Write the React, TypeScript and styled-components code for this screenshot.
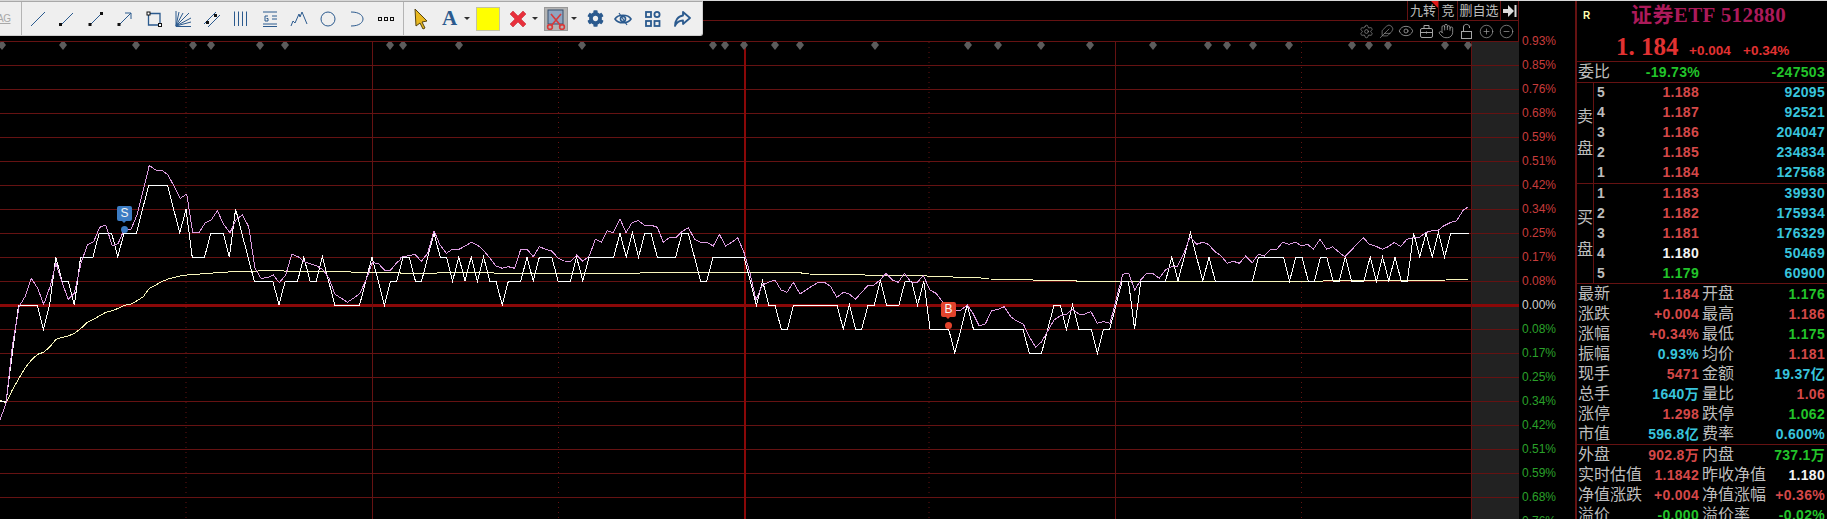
import React from 'react';
import styled, { createGlobalStyle } from 'styled-components';
import { Hand, Eye, CirclePlus, CircleMinus, Feather, Settings } from 'lucide-react';
import { FaCog } from 'react-icons/fa';

const GlobalStyle = createGlobalStyle`
  html, body { margin: 0; padding: 0; background: #000; }
  * { box-sizing: border-box; }
`;

const RED = '#d44848';
const GREEN = '#22c42a';
const CYAN = '#38c4dc';
const WHITE = '#f4f4f4';
const GRID = '#651212';
const STRONG = '#8a0808';
const NAVY = '#2b5a8e';

// chart data, traced from the picture
const white = [0,-4,1,-4,2,-2,3,0,6,0,7,-1,8,0,9,2,10,1,11,1,12,0,13,2,15,2,16,3,18,3,19,2,20,3,22,3,24,5,27,5,29,3,30,4,31,2,33,2,34,3,36,3,37,2,38,4,41,1,44,1,45,0,46,1,48,1,49,2,50,1,51,1,52,2,54,0,58,0,60,2,62,0,63,1,64,1,65,2,66,2,67,1,68,1,70,3,71,2,72,2,73,1,74,2,75,1,76,2,77,1,78,2,79,1,80,1,81,0,82,1,84,1,85,2,86,1,87,2,89,2,90,1,92,1,93,2,94,1,95,2,99,2,100,3,101,2,102,3,103,2,104,3,105,3,106,2,109,2,110,3,111,3,112,2,113,1,114,1,115,2,120,2,122,0,123,1,124,0,125,0,126,-1,127,-1,128,0,135,0,136,-1,137,0,138,-1,139,-1,140,0,141,0,142,1,143,0,145,0,146,1,147,1,148,0,149,1,150,-1,153,-1,154,-2,156,0,157,-1,165,-1,166,-2,168,-2,169,-1,170,0,171,0,172,-1,173,0,174,-1,176,-1,177,-2,178,-1,179,-1,181,1,182,1,183,-1,184,1,188,1,189,2,190,1,192,3,194,1,195,2,196,1,202,1,203,2,207,2,208,1,209,2,210,2,211,1,212,1,213,2,214,2,215,1,216,1,217,2,218,1,220,1,221,2,222,1,223,2,224,1,225,2,226,1,227,1,228,3,229,2,230,3,231,2,232,3,233,2,234,3,237,3];

const whitePoints = () => {
  const out: string[] = [];
  for (let i = 0; i < white.length; i += 2) out.push(`${(white[i] * 6.2).toFixed(1)},${305 - 24 * white[i + 1]}`);
  return out.join(' ');
};

const seg = (ox: number, oy: number, p: number[]) => {
  const out: string[] = [];
  for (let i = 0; i < p.length; i += 2) out.push(`${(ox + p[i] / 3).toFixed(1)},${(oy + p[i + 1] / 3).toFixed(1)}`);
  return out.join(' ');
};

const violet = [
  seg(0, 140, [0,840,18,790,37,620,57,500,75,470,94,415,113,445,131,493,150,440,168,370,187,430,205,478,223,460,243,370,262,315,281,305,299,262,317,255,337,318,355,310,374,265,392,270,411,225,430,150,448,76,467,90,485,90,504,105,523,140,541,175,560,162,578,278,597,278,616,248,634,240,652,212,672,255,690,278,709,238,727,225,746,260,765,385,783,415,802,413,820,405,838,428,857,405,875,343,895,350,913,365,932,372,950,378,968,388,987,415,1005,463,1024,475,1042,487,1060,475,1080,460,1098,420,1117,368,1135,370,1153,390,1172,390,1190,368,1200,360]),
  seg(400, 190, [0,205,8,200,26,197,45,193,64,214,83,190,102,122,120,165,139,190,157,178,177,178,196,168,214,157,232,165,250,180,270,205,288,228,307,235,325,230,344,235,362,178,381,178,400,200,418,170,437,178,455,183,475,205,493,213,512,214,530,195,548,214,568,198,586,148,604,157,622,122,640,128,660,86,678,128,696,98,715,92,733,105,752,105,772,112,790,157,808,143,827,143,845,125,865,113,884,148,902,157,920,157,940,168,958,133,977,168,995,157,1013,143,1033,190]),
  seg(750, 190, [0,250,18,330,37,285,55,277,75,270,93,300,111,307,130,277,150,312,168,300,186,288,205,277,224,277,242,290,260,322,280,307,298,312,316,328,335,307,353,287,372,285,390,270,408,250,427,270,445,277,463,250,483,277,502,277,520,257,540,300,558,310,577,335,595,350,614,360,633,360,652,345,670,372,688,408,706,402,725,362,745,358,763,350,782,380,800,393,820,402,838,440,857,472,875,455,895,420,912,390,930,378,950,372,968,358,986,372,1004,372,1023,365,1042,400,1060,395,1080,400,1098,330]),
  seg(1120, 190, [8,253,26,250,44,300,62,270,80,250,98,250,118,265,136,240,154,230,172,230,192,190,210,140,230,163,248,157,265,163,285,185,303,197,322,220,340,214,358,220,377,198,397,218,415,193,433,198,452,178,470,178,488,157,508,163,527,157,545,168,563,163,580,178,600,148,620,178,638,170,655,185,674,200,692,183,710,163,730,143,748,163,766,168,787,178,805,170,823,157,842,170,860,148,880,143,898,143,916,128,935,122,953,122,972,107,990,98,1010,92,1030,60,1043,52]),
].join(' ');

const average = [
  seg(0, 140, [0,780,18,790,37,750,57,715,75,685,94,660,113,643,131,637,150,620,168,598,187,592,205,588,223,580,243,565,262,547,281,538,299,527,317,517,337,512,355,505,374,496,392,493,411,482,430,470,448,445,467,435,485,425,504,417,523,412,541,408,560,405,600,402,650,398,720,394,830,392,900,395,1030,395,1100,398,1200,398]),
  seg(400, 190, [0,250,110,250,112,247,280,247,282,250,720,250,722,247,1050,247]),
  seg(750, 190, [105,247,175,250,177,252,345,254,347,257,530,257,532,259,640,262,715,265,717,267,845,268,847,270,978,272,980,274,1115,276]),
  seg(1120, 190, [0,275,608,275,610,272,870,272,872,271,980,270,982,268,1043,268]),
].join(' ');

const diamonds = [2,63,136,193,211,260,285,390,403,459,582,713,725,744,775,800,875,968,998,1041,1090,1153,1208,1227,1253,1289,1352,1369,1388,1445,1468];
const levels = [65,89,113,137,161,185,209,233,257,281,329,353,377,401,425,449,473,497];

const axisLabels: [string, string][] = [
  ['0.93%', 'up'],['0.85%', 'up'],['0.76%', 'up'],['0.68%', 'up'],['0.59%', 'up'],['0.51%', 'up'],['0.42%', 'up'],['0.34%', 'up'],['0.25%', 'up'],['0.17%', 'up'],['0.08%', 'up'],
  ['0.00%', 'flat'],
  ['0.08%', 'down'],['0.17%', 'down'],['0.25%', 'down'],['0.34%', 'down'],['0.42%', 'down'],['0.51%', 'down'],['0.59%', 'down'],['0.68%', 'down'],['0.76%', 'down'],
];

const sells = [['5','1.188','92095'],['4','1.187','92521'],['3','1.186','204047'],['2','1.185','234834'],['1','1.184','127568']];
const buys = [['1','1.183','39930',RED],['2','1.182','175934',RED],['3','1.181','176329',RED],['4','1.180','50469',WHITE],['5','1.179','60900',GREEN]];

type Cell = [string, string, string];
const infoRows: [Cell, Cell][] = [
  [['最新','1.184',RED],['开盘','1.176',GREEN]],
  [['涨跌','+0.004',RED],['最高','1.186',RED]],
  [['涨幅','+0.34%',RED],['最低','1.175',GREEN]],
  [['振幅','0.93%',CYAN],['均价','1.181',RED]],
  [['现手','5471',RED],['金额','19.37亿',CYAN]],
  [['总手','1640万',CYAN],['量比','1.06',RED]],
  [['涨停','1.298',RED],['跌停','1.062',GREEN]],
  [['市值','596.8亿',CYAN],['费率','0.600%',CYAN]],
];
const fundRows: [Cell, Cell][] = [
  [['外盘','902.8万',RED],['内盘','737.1万',GREEN]],
  [['实时估值','1.1842',RED],['昨收净值','1.180',WHITE]],
  [['净值涨跌','+0.004',RED],['净值涨幅','+0.36%',RED]],
  [['溢价','-0.000',GREEN],['溢价率','-0.02%',GREEN]],
];

const Page = styled.div`
  width: 1827px;
  height: 519px;
  display: flex;
  overflow: hidden;
  background: #000;
  border-top: 1px solid #d8d8d8;
  font-family: 'Liberation Sans', 'Noto Sans CJK SC', sans-serif;
`;

const ChartColumn = styled.div`
  position: relative;
  width: 1519px;
  flex: none;
  display: flex;
  flex-direction: column;
`;

const HeaderRow = styled.div<{ $height: number }>`
  height: ${p => p.$height}px;
  flex: none;
  display: flex;
  justify-content: flex-end;
  align-items: stretch;
  border-bottom: 1px solid ${GRID};
  border-right: 1px solid ${GRID};
`;

const HeaderButton = styled.div<{ $width: number; $flagged?: boolean }>`
  position: relative;
  width: ${p => p.$width}px;
  display: flex;
  align-items: center;
  justify-content: center;
  border-left: 1px solid ${GRID};
  color: #bcbcbc;
  font-size: 13px;
  line-height: 1;
  ${p => p.$flagged && `
    &::after {
      content: '';
      position: absolute;
      top: 0;
      right: 0;
      border-top: 7px solid #e01818;
      border-left: 7px solid transparent;
    }
  `}
`;

const ViewTools = styled.div`
  display: flex;
  align-items: center;
  padding-right: 2px;
  color: #a4a4a4;
`;

const ViewTool = styled.span`
  width: 20px;
  height: 20px;
  display: flex;
  align-items: center;
  justify-content: center;
`;

const Plot = styled.div`
  position: relative;
  flex: 1;
  min-height: 0;
`;

const PlotSvg = styled.svg`
  display: block;
  width: 1519px;
  height: 477px;
`;

const Marker = styled.div<{ $left: number; $top: number; $color: string }>`
  position: absolute;
  left: ${p => p.$left}px;
  top: ${p => p.$top}px;
  width: 15px;
  height: 15px;
  border-radius: 2px;
  background: ${p => p.$color};
  color: #f4f4f4;
  font-size: 12px;
  line-height: 15px;
  text-align: center;
  &::after {
    content: '';
    position: absolute;
    left: 5px;
    top: 15px;
    border-top: 2px solid ${p => p.$color};
    border-left: 2px solid transparent;
    border-right: 2px solid transparent;
  }
`;

const MarkerDot = styled.div<{ $left: number; $top: number; $color: string }>`
  position: absolute;
  left: ${p => p.$left}px;
  top: ${p => p.$top}px;
  width: 7px;
  height: 7px;
  border-radius: 50%;
  background: ${p => p.$color};
`;

const Toolbar = styled.div`
  position: absolute;
  left: 0;
  top: 0;
  width: 703px;
  height: 35px;
  display: flex;
  align-items: center;
  background: #efefef;
  border-top: 1px solid #a8a8a8;
  border-right: 1px solid #cfcfcf;
  border-bottom: 1px solid #cfcfcf;
  border-radius: 0 0 3px 0;
`;

const ToolGroup = styled.div<{ $width: number; $pad: number }>`
  width: ${p => p.$width}px;
  height: 100%;
  flex: none;
  display: flex;
  align-items: center;
  padding-left: ${p => p.$pad}px;
  overflow: hidden;
  border-right: 1px solid #b4b4b4;
`;

const ToolGroupEnd = styled(ToolGroup)`
  border-right: none;
`;

const ClippedTag = styled.span`
  color: #a8a8a8;
  font-size: 10px;
  text-decoration: underline;
  margin-left: -3px;
  letter-spacing: -0.5px;
`;

const Tool = styled.span<{ $width: number }>`
  width: ${p => p.$width}px;
  height: 24px;
  flex: none;
  display: flex;
  align-items: center;
  justify-content: center;
  color: ${NAVY};
`;

const Letter = styled.span`
  font-family: 'Liberation Serif', serif;
  font-weight: 700;
  font-size: 21px;
  line-height: 1;
  color: ${NAVY};
`;

const Caret = styled.span`
  flex: none;
  width: 0;
  height: 0;
  border-top: 3px solid #303030;
  border-left: 3px solid transparent;
  border-right: 3px solid transparent;
  margin-right: 6px;
`;

const Swatch = styled.span`
  flex: none;
  width: 24px;
  height: 24px;
  margin-right: 4px;
  background: #ffff00;
  border: 1px solid #c4c4a0;
`;

const PressedTool = styled.span`
  flex: none;
  width: 24px;
  height: 24px;
  margin-right: 3px;
  display: flex;
  align-items: center;
  justify-content: center;
  background: #b4b4b4;
  border: 1px solid #999;
`;

const Axis = styled.div`
  width: 56px;
  flex: none;
  padding: 28px 0 0 3px;
  font-size: 12px;
  overflow: hidden;
`;

const AxisLabel = styled.div<{ $kind: string }>`
  height: 24px;
  line-height: 24px;
  color: ${p => (p.$kind === 'up' ? '#c83c3c' : p.$kind === 'down' ? '#2aa12a' : '#cfcfcf')};
`;

const Panel = styled.div`
  flex: 1;
  min-width: 0;
  display: flex;
  flex-direction: column;
  border-left: 2px solid ${GRID};
  color: #bdbdbd;
  font-size: 16px;
`;

const TitleRow = styled.div`
  height: 30px;
  flex: none;
  display: flex;
  align-items: center;
  padding: 0 0 2px 6px;
`;

const RowTag = styled.span`
  width: 48px;
  flex: none;
  color: #ffffb0;
  font-size: 10px;
  font-weight: 700;
`;

const Title = styled.span`
  color: #ac1a5a;
  font-family: 'Liberation Serif', 'Noto Sans CJK SC', serif;
  font-size: 21px;
  font-weight: 700;
  line-height: 1;
  letter-spacing: 0.4px;
  white-space: nowrap;
`;

const PriceRow = styled.div`
  height: 31px;
  flex: none;
  display: flex;
  align-items: baseline;
  padding: 2px 0 0 39px;
  border-bottom: 1px solid ${GRID};
  color: #e23232;
`;

const BigPrice = styled.span`
  width: 73px;
  font-family: 'Liberation Serif', serif;
  font-size: 25px;
  font-weight: 700;
  white-space: pre;
`;

const SmallChange = styled.span`
  width: 54px;
  font-size: 13.5px;
  font-weight: 700;
`;

const Number = styled.span<{ $color: string }>`
  color: ${p => p.$color};
  font-size: 14px;
  font-weight: 700;
  letter-spacing: 0.3px;
  white-space: nowrap;
`;

const RatioRow = styled.div`
  height: 21px;
  flex: none;
  display: grid;
  grid-template-columns: 122px 125px;
  align-items: center;
  padding-left: 1px;
  border-bottom: 1px solid ${GRID};
`;

const HalfCell = styled.div`
  display: flex;
  justify-content: space-between;
  align-items: center;
  min-width: 0;
  white-space: nowrap;
  line-height: 20px;
`;

const Depth = styled.div<{ $height: number }>`
  height: ${p => p.$height}px;
  flex: none;
  display: flex;
  border-bottom: 1px solid ${GRID};
`;

const DepthSide = styled.div`
  width: 17px;
  flex: none;
  display: flex;
  flex-direction: column;
  justify-content: center;
  gap: 16px;
  border-right: 1px solid ${GRID};
  line-height: 16px;
`;

const DepthRows = styled.div`
  flex: 1;
  min-width: 0;
  display: flex;
  flex-direction: column;
`;

const DepthRow = styled.div`
  height: 20px;
  flex: none;
  display: grid;
  grid-template-columns: 14px 88px 126px;
  align-items: center;
  padding: 0 0 2px 3px;
`;

const RightNumber = styled(Number)`
  text-align: right;
`;

const InfoBlock = styled.div`
  flex: none;
  display: flex;
  flex-direction: column;
  padding-left: 1px;
`;

const TopRule = styled(InfoBlock)`
  border-bottom: 1px solid ${GRID};
`;

const InfoRow = styled.div`
  height: 20px;
  flex: none;
  display: grid;
  grid-template-columns: 121px 123px;
  column-gap: 3px;
  align-items: center;
  padding-bottom: 2px;
`;

const ICON = { fill: 'none', stroke: 'currentColor', strokeWidth: 1 };

const LineIcon = () => <svg width="18" height="18" viewBox="0 0 18 18" {...ICON}><path d="M2 16 L16 2" /></svg>;
const RayIcon = () => <svg width="18" height="18" viewBox="0 0 18 18" {...ICON}><path d="M3 15 L15 3" /><rect x="1" y="13" width="3" height="3" fill="#111" stroke="none" /></svg>;
const SegmentIcon = () => <svg width="18" height="18" viewBox="0 0 18 18" {...ICON}><path d="M3 15 L14 4" /><rect x="1.5" y="13" width="3" height="3" fill="#111" stroke="none" /><rect x="13" y="2" width="3" height="3" fill="#111" stroke="none" /></svg>;
const ArrowIcon = () => <svg width="18" height="18" viewBox="0 0 18 18" {...ICON}><path d="M3 15 L15 3 M9 3 H15 V9" /><rect x="1.5" y="13" width="3" height="3" fill="#111" stroke="none" /></svg>;
const RectIcon = () => <svg width="18" height="18" viewBox="0 0 18 18" {...ICON}><path d="M3.5 3.5 H15 V15 H3.5 Z" strokeWidth="1.3" /><rect x="2" y="2" width="3" height="3" fill="#fff" stroke="#111" /><rect x="13.5" y="13.5" width="3" height="3" fill="#fff" stroke="#111" /></svg>;
const FanIcon = () => <svg width="18" height="18" viewBox="0 0 18 18" {...ICON}><path d="M2 1 V16.5 H17 M2 16 L5 2 M2 16 L9 3 M2 16 L15 3 M2 16 L17 8 M2 16 L17 12" /></svg>;
const ParallelIcon = () => <svg width="18" height="18" viewBox="0 0 18 18" {...ICON}><path d="M1 14 L13 2 M5 17 L17 5" /><rect x="3" y="11" width="3" height="3" fill="#111" stroke="none" /><rect x="11" y="4" width="3" height="3" fill="#111" stroke="none" /></svg>;
const BarsIcon = () => <svg width="18" height="18" viewBox="0 0 18 18" {...ICON}><path d="M2.5 1.5 V16 M6.5 1.5 V16 M10.5 1.5 V16 M14.5 1.5 V16" /></svg>;
const GannIcon = () => <svg width="18" height="18" viewBox="0 0 18 18" {...ICON}><path d="M2 2 H16 M2 14 H16 M2 16.5 H16 M11 6 H16 M11 9 H16 M7 6 H4 V11 H7 V8.5 H5.5" /></svg>;
const PeakIcon = () => <svg width="18" height="18" viewBox="0 0 18 18" {...ICON}><path d="M1 16 L3 11 L5 13 L9 4 L10 7 L12 2 L17 14" /></svg>;
const CircleIcon = () => <svg width="18" height="18" viewBox="0 0 18 18" {...ICON}><circle cx="9" cy="9" r="7" /></svg>;
const ArcIcon = () => <svg width="18" height="18" viewBox="0 0 18 18" {...ICON}><path d="M3 2 C12 2 15 6 15 9 C15 12 12 16 3 16" /></svg>;
const DotsIcon = () => <svg width="18" height="18" viewBox="0 0 18 18" fill="none" stroke="#111"><rect x="1.5" y="7.5" width="3" height="3" /><rect x="7.5" y="7.5" width="3" height="3" /><rect x="13.5" y="7.5" width="3" height="3" /></svg>;
const CursorIcon = () => <svg width="16" height="22" viewBox="0 0 16 22"><path d="M2 1 L14 13 L9 14 L12 20 L10 21 L7 15 L3 18 Z" fill="#e8b820" stroke="#554410" /></svg>;
const CrossIcon = () => <svg width="20" height="20" viewBox="0 0 20 20"><path d="M2 5 L5 2 L10 7 L15 2 L18 5 L13 10 L18 15 L15 18 L10 13 L5 18 L2 15 L7 10 Z" fill="#e8303c" stroke="#c02028" strokeWidth="0.5" /></svg>;
const EraseIcon = () => (
  <svg width="20" height="22" viewBox="0 0 20 22" fill="none">
    <rect x="2" y="2" width="15" height="14" fill="#8fa4c0" stroke="#38506e" />
    <path d="M5 6 L15 18 M15 6 L5 18" stroke="#d83a3a" strokeWidth="1.6" />
    <circle cx="4" cy="19" r="2.4" stroke="#d83a3a" strokeWidth="1.6" />
    <circle cx="16" cy="19" r="2.4" stroke="#d83a3a" strokeWidth="1.6" />
  </svg>
);
const HiddenIcon = () => (
  <svg width="18" height="18" viewBox="0 0 18 18" fill="none" stroke={NAVY} strokeWidth="1.6">
    <path d="M1 9 C4 4 14 4 17 9 C14 14 4 14 1 9 Z" />
    <circle cx="9" cy="9" r="2.5" />
    <path d="M5 3 L13 15" strokeWidth="1.2" />
  </svg>
);
const AppsIcon = () => (
  <svg width="18" height="18" viewBox="0 0 18 18" fill="none" stroke={NAVY} strokeWidth="1.8">
    <rect x="2" y="2" width="5" height="5" />
    <circle cx="13" cy="4.5" r="2.6" />
    <rect x="2" y="11" width="5" height="5" />
    <rect x="10.5" y="11" width="5" height="5" />
  </svg>
);
const ForwardIcon = () => (
  <svg width="18" height="18" viewBox="0 0 18 18" fill="none" stroke={NAVY} strokeWidth="1.8" strokeLinejoin="round">
    <path d="M10 2 L17 8 L10 14 V10.5 C6 10.5 3.5 12.5 2 16 C2 10.5 5 6 10 5.5 Z" />
  </svg>
);
const BoxIcon = () => (
  <svg width="15" height="15" viewBox="0 0 15 15" fill="none" stroke="currentColor">
    <rect x="1.5" y="4.5" width="12" height="9" rx="1.5" />
    <path d="M5 4.5 V1.5 H10 V4.5 M1.5 8.5 H13.5 M7.5 7.5 V9.5" />
  </svg>
);
const OpenLockIcon = () => (
  <svg width="15" height="17" viewBox="0 0 15 17" fill="none" stroke="currentColor">
    <rect x="2.5" y="8.5" width="10" height="7" />
    <path d="M4.5 8.5 V4 C4.5 0.5 10.5 0.5 10.5 4 V5" />
  </svg>
);
const JumpIcon = () => (
  <svg width="14" height="12" viewBox="0 0 14 12" fill="#dcdcdc">
    <path d="M0 4 H5 V0 L11 6 L5 12 V8 H0 Z" />
    <rect x="11.5" y="0" width="2" height="12" />
  </svg>
);

const drawTools = [LineIcon, RayIcon, SegmentIcon, ArrowIcon, RectIcon, FanIcon, ParallelIcon, BarsIcon, GannIcon, PeakIcon, CircleIcon, ArcIcon, DotsIcon];

function Chart() {
  return (
    <PlotSvg viewBox="0 42 1519 477">
      <rect x="1471" y="42" width="48" height="477" fill="#222" />
      {levels.map(y => (
        <line key={y} x1="0" x2="1519" y1={y + 0.5} y2={y + 0.5} stroke={GRID} />
      ))}
      <rect x="0" y="304" width="1519" height="3" fill={STRONG} />
      {[186, 558.5, 929, 1301.5].map(x => (
        <line key={x} x1={x} x2={x} y1="42" y2="519" stroke={GRID} strokeDasharray="1 4" />
      ))}
      {[372.5, 1115.5, 1471.5].map(x => (
        <line key={x} x1={x} x2={x} y1="42" y2="519" stroke={GRID} />
      ))}
      <rect x="744" y="42" width="2" height="477" fill={STRONG} />
      {diamonds.map(x => (
        <path key={x} d={`M${x} 40 L${x + 4} 45 L${x} 50 L${x - 4} 45 Z`} fill="#5c5c5c" />
      ))}
      <g fill="none" shapeRendering="crispEdges">
        <polyline points={average} stroke="#f8f6bc" />
        <polyline points={whitePoints()} stroke="#ffffff" />
        <polyline points={violet} stroke="#dc9ce0" />
      </g>
    </PlotSvg>
  );
}

function Info({ cell }: { cell: Cell }) {
  return (
    <HalfCell>
      <span>{cell[0]}</span>
      <Number $color={cell[2]}>{cell[1]}</Number>
    </HalfCell>
  );
}

export default function App() {
  return (
    <>
      <GlobalStyle />
      <Page>
        <ChartColumn>
          <HeaderRow $height={20}>
            <HeaderButton $width={31} $flagged>九转</HeaderButton>
            <HeaderButton $width={19}>竞</HeaderButton>
            <HeaderButton $width={43}>删自选</HeaderButton>
            <HeaderButton $width={18}><JumpIcon /></HeaderButton>
          </HeaderRow>
          <HeaderRow $height={21}>
            <ViewTools>
              <ViewTool><Settings size={15} strokeWidth={1} /></ViewTool>
              <ViewTool><Feather size={15} strokeWidth={1} /></ViewTool>
              <ViewTool><Eye size={16} strokeWidth={1.2} /></ViewTool>
              <ViewTool><BoxIcon /></ViewTool>
              <ViewTool><Hand size={16} strokeWidth={1.2} /></ViewTool>
              <ViewTool><OpenLockIcon /></ViewTool>
              <ViewTool><CirclePlus size={15} strokeWidth={1.1} /></ViewTool>
              <ViewTool><CircleMinus size={15} strokeWidth={1.1} /></ViewTool>
            </ViewTools>
          </HeaderRow>
          <Plot>
            <Chart />
            <Marker $left={117} $top={164} $color="#3c7cc4">S</Marker>
            <MarkerDot $left={121} $top={184} $color="#3c7cc4" />
            <Marker $left={941} $top={260} $color="#e2432c">B</Marker>
            <MarkerDot $left={945} $top={280} $color="#e2432c" />
          </Plot>
          <Toolbar>
            <ToolGroup $width={22} $pad={0}>
              <ClippedTag>AG</ClippedTag>
            </ToolGroup>
            <ToolGroup $width={382} $pad={1}>
              {drawTools.map((Icon, i) => (
                <Tool key={i} $width={29}><Icon /></Tool>
              ))}
            </ToolGroup>
            <ToolGroupEnd $width={298} $pad={2}>
              <Tool $width={29}><CursorIcon /></Tool>
              <Tool $width={29}><Letter>A</Letter></Tool>
              <Caret />
              <Swatch />
              <Tool $width={28}><CrossIcon /></Tool>
              <Caret />
              <PressedTool><EraseIcon /></PressedTool>
              <Caret />
              <Tool $width={25}><FaCog size={17} /></Tool>
              <Tool $width={30}><HiddenIcon /></Tool>
              <Tool $width={29}><AppsIcon /></Tool>
              <Tool $width={29}><ForwardIcon /></Tool>
            </ToolGroupEnd>
          </Toolbar>
        </ChartColumn>

        <Axis>
          {axisLabels.map(([text, kind], i) => (
            <AxisLabel key={i} $kind={kind}>{text}</AxisLabel>
          ))}
        </Axis>

        <Panel>
          <TitleRow>
            <RowTag>R</RowTag>
            <Title>证券ETF 512880</Title>
          </TitleRow>
          <PriceRow>
            <BigPrice>1. 184</BigPrice>
            <SmallChange>+0.004</SmallChange>
            <SmallChange>+0.34%</SmallChange>
          </PriceRow>
          <RatioRow>
            <HalfCell>
              <span>委比</span>
              <Number $color={GREEN}>-19.73%</Number>
            </HalfCell>
            <RightNumber $color={GREEN}>-247503</RightNumber>
          </RatioRow>
          <Depth $height={101}>
            <DepthSide><span>卖</span><span>盘</span></DepthSide>
            <DepthRows>
              {sells.map(([level, price, volume]) => (
                <DepthRow key={level}>
                  <Number $color="#bdbdbd">{level}</Number>
                  <RightNumber $color={RED}>{price}</RightNumber>
                  <RightNumber $color={CYAN}>{volume}</RightNumber>
                </DepthRow>
              ))}
            </DepthRows>
          </Depth>
          <Depth $height={100}>
            <DepthSide><span>买</span><span>盘</span></DepthSide>
            <DepthRows>
              {buys.map(([level, price, volume, color]) => (
                <DepthRow key={level}>
                  <Number $color="#bdbdbd">{level}</Number>
                  <RightNumber $color={color}>{price}</RightNumber>
                  <RightNumber $color={CYAN}>{volume}</RightNumber>
                </DepthRow>
              ))}
            </DepthRows>
          </Depth>
          <TopRule>
            {infoRows.map((row, i) => (
              <InfoRow key={i}><Info cell={row[0]} /><Info cell={row[1]} /></InfoRow>
            ))}
          </TopRule>
          <InfoBlock>
            {fundRows.map((row, i) => (
              <InfoRow key={i}><Info cell={row[0]} /><Info cell={row[1]} /></InfoRow>
            ))}
          </InfoBlock>
        </Panel>
      </Page>
    </>
  );
}
